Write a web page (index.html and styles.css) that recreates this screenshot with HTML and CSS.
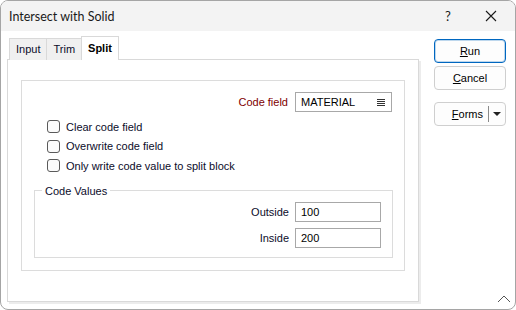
FILE: index.html
```html
<!DOCTYPE html>
<html>
<head>
<meta charset="utf-8">
<link rel="stylesheet" href="styles.css">
</head>
<body>
<div class="window">
  <div class="titlebar">
    <span class="title">Intersect with Solid</span>
    <span class="help">?</span>
    <span class="close">
      <svg width="12" height="12" viewBox="0 0 12 12"><path d="M1 1 L11 11 M11 1 L1 11" stroke="#1a1a1a" stroke-width="1.1" fill="none"/></svg>
    </span>
  </div>
  <div class="content">
    <div class="left">
      <div class="tabs">
        <div class="tab">Input</div>
        <div class="tab">Trim</div>
        <div class="tab active">Split</div>
      </div>
      <div class="panel">
        <div class="group">
          <div class="field-row">
            <span class="label code-label">Code field</span>
            <div class="input select">
              <span>MATERIAL</span>
              <svg class="list-icon" width="8" height="8" viewBox="0 0 8 8"><path d="M0 1.5H8M0 3.5H8M0 5.5H8M0 7.5H8" stroke="#333" stroke-width="1"/></svg>
            </div>
          </div>
          <div class="checks">
            <label class="check"><span class="box"></span><span>Clear code field</span></label>
            <label class="check"><span class="box"></span><span>Overwrite code field</span></label>
            <label class="check"><span class="box"></span><span>Only write code value to split block</span></label>
          </div>
          <fieldset class="values">
            <legend>Code Values</legend>
            <div class="value-row">
              <span class="label">Outside</span>
              <div class="input short">100</div>
            </div>
            <div class="value-row">
              <span class="label">Inside</span>
              <div class="input short">200</div>
            </div>
          </fieldset>
        </div>
      </div>
    </div>
    <div class="right">
      <button class="btn primary"><u>R</u>un</button>
      <button class="btn"><u>C</u>ancel</button>
      <button class="btn forms"><span class="forms-text"><u>F</u>orms</span><span class="sep"></span><span class="arrow"></span></button>
    </div>
  </div>
  <svg class="grip" width="14" height="8" viewBox="0 0 14 8"><path d="M1 7 L7 1 L13 7" stroke="#555" stroke-width="1" fill="none"/></svg>
</div>
</body>
</html>
```

FILE: styles.css
```css
* { box-sizing: border-box; }
html, body { margin: 0; padding: 0; background: #ffffff; }
body {
  font-family: "Liberation Sans", Arial, sans-serif;
  font-size: 11px;
  color: #0c0c2a;
}
.window {
  position: relative;
  width: 516px;
  height: 310px;
  border: 1px solid #a5a5a5;
  border-radius: 8px;
  overflow: hidden;
  background: #ffffff;
}
.titlebar {
  height: 30px;
  background: #f3f3f3;
  display: flex;
  align-items: center;
  padding-left: 8px;
}
.title { color: #1a1a1a; flex: 1; font-family: "Lato", "Noto Sans", sans-serif; font-size: 12.5px; }
.help { width: 14px; margin-right: 26px; color: #1a1a1a; font-size: 13px; font-family: "Lato", sans-serif; }
.close { width: 12px; height: 12px; margin-right: 18px; display: flex; }
.content {
  display: flex;
  padding: 5px 0 0 6px;
}
.left { width: 412px; }
.tabs {
  display: flex;
  align-items: flex-end;
  height: 24px;
  padding-left: 2px;
  margin-bottom: -1px;
}
.tab {
  position: relative;
  height: 22px;
  padding: 0 6px;
  line-height: 21px;
  background: #f0f0f0;
  border: 1px solid #d9d9d9;
  border-bottom: none;
  margin-right: -1px;
  color: #0c0c2a;
}
.tab.active {
  z-index: 1;
  height: 24px;
  line-height: 22px;
  background: #ffffff;
  font-weight: bold;
  color: #000;
  padding: 0 6px;
}
.panel {
  height: 243px;
  border: 1px solid #d9d9d9;
  background: #fff;
  box-shadow: 2px 2px 0 #ececec;
  padding: 20px 0 0 13px;
}
.group {
  width: 384px;
  height: 191px;
  border: 1px solid #dcdcdc;
  padding: 11px 0 0 0;
}
.field-row {
  display: flex;
  justify-content: flex-end;
  align-items: center;
  gap: 7px;
  padding-right: 12px;
}
.label { color: #0c0c2a; }
.code-label { color: #800000; }
.input {
  height: 20px;
  border: 1px solid #a8a8a8;
  background: #fff;
  padding: 0 5px;
  line-height: 18px;
  color: #000;
}
.select {
  width: 97px;
  display: flex;
  justify-content: space-between;
  align-items: center;
}
.list-icon { margin-right: 1px; }
.checks {
  padding-left: 25px;
  margin-top: 5px;
}
.check {
  display: flex;
  align-items: center;
  height: 19.5px;
  gap: 6px;
}
.box {
  width: 13px;
  height: 13px;
  border: 1px solid #5a5a5a;
  border-radius: 3px;
  background: #fbfbfb;
}
.values {
  margin: 7px 11px 0 12px;
  padding: 3px 11px 9px 0;
  border: 1px solid #dcdcdc;
  min-width: 0;
}
.values legend {
  margin-left: 7px;
  padding: 0 3px;
  line-height: 16px;
  color: #0c0c2a;
}
.value-row {
  display: flex;
  justify-content: flex-end;
  align-items: center;
  gap: 6px;
  margin-bottom: 6px;
}
.value-row:last-child { margin-bottom: 0; }
.short { width: 86px; }
.right {
  margin-left: 15px;
  padding-top: 3px;
  width: 72px;
  display: flex;
  flex-direction: column;
}
.btn {
  font-family: inherit;
  font-size: 11px;
  color: #000;
  height: 24px;
  background: #fdfdfd;
  border: 1px solid #cfcfcf;
  border-radius: 4px;
  padding: 0;
  margin: 0 0 3px 0;
}
.btn.primary {
  border: 1px solid #0067c0;
  box-shadow: inset 0 0 0 1px rgba(0, 103, 192, 0.25);
}
.btn.forms {
  margin-top: 9px;
  display: flex;
  align-items: center;
}
.forms-text { flex: 1; text-align: right; padding-right: 5px; }
.sep { width: 1px; height: 16px; background: #8a8a8a; }
.arrow {
  width: 0; height: 0;
  margin: 0 4px 0 4px;
  border-left: 4px solid transparent;
  border-right: 4px solid transparent;
  border-top: 4px solid #222;
}
.grip { position: absolute; right: 4px; bottom: 6px; }
```
